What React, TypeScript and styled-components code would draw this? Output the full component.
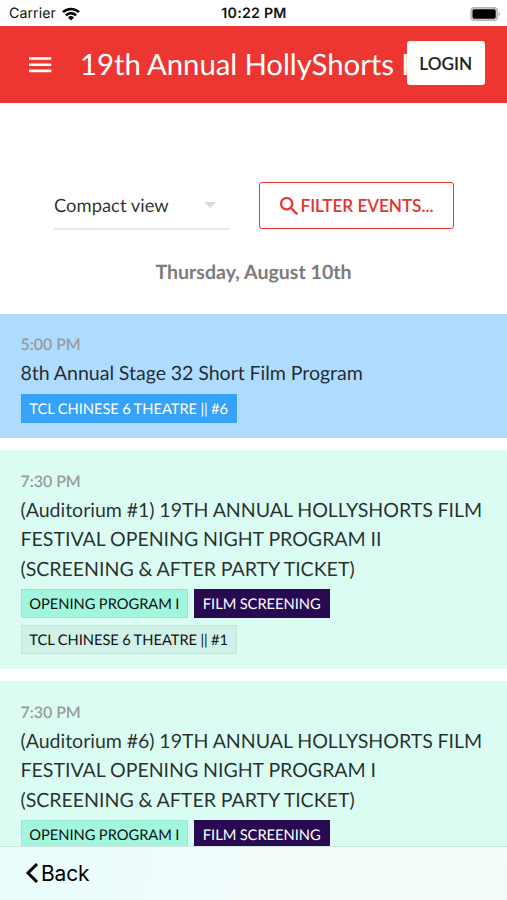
import React from 'react';
import styled, { createGlobalStyle } from 'styled-components';

const GlobalStyle = createGlobalStyle`
  * { box-sizing: border-box; }
  body {
    margin: 0;
    background: #fff;
    font-family: Lato, sans-serif;
    color: rgba(0, 0, 0, 0.82);
    text-rendering: geometricPrecision;
  }
`;

const Screen = styled.div`
  display: flex;
  flex-direction: column;
  width: 507px;
  height: 900px;
  overflow: hidden;
  background: #fff;
`;

const StatusBar = styled.div`
  flex: none;
  display: grid;
  grid-template-columns: 1fr auto 1fr;
  align-items: center;
  height: 26px;
  padding: 1px 6px 0 9px;
  font-family: Inter, sans-serif;
  font-size: 14.2px;
  color: #111;
`;

const Carrier = styled.div`
  display: flex;
  align-items: center;
  gap: 6px;
  letter-spacing: 0.06px;
`;

const Clock = styled.div`
  padding-right: 2px;
  font-weight: 600;
  letter-spacing: 0.25px;
`;

const BatterySlot = styled.div`
  display: flex;
  justify-content: flex-end;
`;

const Header = styled.header`
  flex: none;
  display: flex;
  align-items: center;
  height: 77px;
  padding: 0 22px 0 27px;
  background: #ed3532;
  color: #fff;
`;

const MenuButton = styled.button`
  flex: none;
  display: flex;
  margin: 0 27px 0 0;
  padding: 0;
  border: 0;
  background: none;
`;

const Title = styled.h1`
  flex: 1;
  min-width: 0;
  margin: 0;
  overflow: hidden;
  white-space: nowrap;
  font-size: 29.4px;
  font-weight: 400;
  line-height: 40px;
  letter-spacing: -0.07px;
  word-spacing: -0.2px;
`;

const LoginButton = styled.button`
  flex: none;
  width: 78.5px;
  height: 44px;
  margin-top: -3px;
  padding: 0;
  border: 0;
  border-radius: 3px;
  background: #fff;
  color: #222;
  font: 600 17.2px Lato, sans-serif;
`;

const Controls = styled.div`
  flex: none;
  display: flex;
  justify-content: space-between;
  height: 47px;
  margin: 79px 53px 0 54px;
`;

const Select = styled.div`
  display: flex;
  align-items: center;
  justify-content: space-between;
  width: 176px;
  height: 48px;
  padding: 0 14px 1px 0;
  border-bottom: 2px solid #e9e9e9;
  font-size: 18.4px;
`;

const FilterButton = styled.button`
  display: flex;
  align-items: center;
  justify-content: center;
  gap: 3px;
  width: 195px;
  height: 47px;
  padding: 0;
  border: 1.4px solid #ed3532;
  border-radius: 3px;
  background: #fff;
  color: #e53431;
  font: 600 17.2px Lato, sans-serif;
  letter-spacing: -0.06px;
`;

const DayHeading = styled.h2`
  flex: none;
  margin: 29px 0 26.6px;
  text-align: center;
  font-size: 19.6px;
  font-weight: 700;
  line-height: 29px;
  color: #7c7c7c;
`;

const EventList = styled.main`
  flex: 1;
  min-height: 0;
  display: flex;
  flex-direction: column;
  gap: 12.4px;
  overflow: hidden;
`;

const EventCard = styled.article<{ $bg: string }>`
  flex: none;
  padding: 20.5px 20.5px 15px;
  background: ${(p) => p.$bg};
`;

const EventTime = styled.div`
  height: 25px;
  font-size: 15.9px;
  font-weight: 600;
  line-height: 22px;
  color: #999;
`;

const EventTitle = styled.h3`
  margin: 0 -5px 0 0;
  font-size: 19.6px;
  font-weight: 400;
  line-height: 29.4px;
  letter-spacing: -0.04px;
  word-spacing: -0.15px;
`;

const Tags = styled.div`
  display: flex;
  flex-wrap: wrap;
  gap: 6.6px 5.9px;
  margin-top: 5.4px;
`;

type Tone = 'blue' | 'mint' | 'purple' | 'pale';

const tones: Record<Tone, [string, string, string]> = {
  blue: ['#36a3fb', '#fff', '#36a3fb'],
  mint: ['#a2f6de', '#111', '#93ecd2'],
  purple: ['#270a52', '#fff', '#270a52'],
  pale: ['#d0f1e8', '#111', '#c1e6dc'],
};

const Tag = styled.span<{ $tone: Tone }>`
  height: 29px;
  padding: 0 7.8px;
  border: 1px solid ${(p) => tones[p.$tone][2]};
  background: ${(p) => tones[p.$tone][0]};
  color: ${(p) => tones[p.$tone][1]};
  font-size: 14.7px;
  line-height: 28.2px;
  letter-spacing: -0.02px;
  word-spacing: -0.4px;
  white-space: nowrap;
`;

const BottomBar = styled.nav`
  flex: none;
  display: flex;
  align-items: center;
  height: 54px;
  padding: 0 25px 1px;
  border-top: 1px solid #cfe3df;
  background: linear-gradient(100deg, #e9fdfd, #f4fcfa 65%, #f1fcf9);
`;

const BackButton = styled.button`
  display: flex;
  align-items: center;
  gap: 2px;
  padding: 0;
  border: 0;
  background: none;
  color: #000;
  font: 400 21px Inter, sans-serif;
  letter-spacing: -0.2px;
`;

const events: { time: string; title: string; bg: string; tags: [string, Tone][] }[] = [
  {
    time: '5:00 PM',
    title: '8th Annual Stage 32 Short Film Program',
    bg: '#afdbff',
    tags: [['TCL CHINESE 6 THEATRE || #6', 'blue']],
  },
  {
    time: '7:30 PM',
    title:
      '(Auditorium #1) 19TH ANNUAL HOLLYSHORTS FILM FESTIVAL OPENING NIGHT PROGRAM II (SCREENING & AFTER PARTY TICKET)',
    bg: '#dafcf3',
    tags: [
      ['OPENING PROGRAM I', 'mint'],
      ['FILM SCREENING', 'purple'],
      ['TCL CHINESE 6 THEATRE || #1', 'pale'],
    ],
  },
  {
    time: '7:30 PM',
    title:
      '(Auditorium #6) 19TH ANNUAL HOLLYSHORTS FILM FESTIVAL OPENING NIGHT PROGRAM I (SCREENING & AFTER PARTY TICKET)',
    bg: '#dafcf3',
    tags: [
      ['OPENING PROGRAM I', 'mint'],
      ['FILM SCREENING', 'purple'],
    ],
  },
];

const WifiIcon = () => (
  <svg width="18" height="14" viewBox="0 0 18 14" fill="none" stroke="#000" strokeWidth="2.5">
    <path d="M1 5.2a11.4 11.4 0 0 1 16 0" />
    <path d="M3.9 8.3a7.2 7.2 0 0 1 10.2 0" />
    <path d="M9 13.6 6 10.5a4.3 4.3 0 0 1 6 0Z" fill="#000" stroke="none" />
  </svg>
);

const BatteryIcon = () => (
  <svg width="31" height="14" viewBox="0 0 31 14">
    <rect x="0.9" y="0.7" width="26.6" height="12.6" rx="3.4" fill="#ccc" stroke="#b4b4b4" strokeWidth="1.2" />
    <rect x="2.5" y="2.2" width="23.2" height="9.6" rx="1.8" fill="#000" />
    <path d="M28.7 4.8a2.5 2.5 0 0 1 0 4.4Z" fill="#aaa" />
  </svg>
);

const MenuIcon = () => (
  <svg width="26" height="18" viewBox="0 0 26 18" fill="#fff">
    <path d="M2 1.2h22.3v2.6H2zM2 7.4h22.3v2.6H2zM2 13.6h22.3v2.6H2z" />
  </svg>
);

const CaretIcon = () => (
  <svg width="12" height="6" viewBox="0 0 12 6" fill="#dadada">
    <path d="M0 0h12L6 6Z" />
  </svg>
);

const SearchIcon = () => (
  <svg width="18" height="18" viewBox="3 3 17.5 17.5" fill="currentColor" stroke="currentColor" strokeWidth="0.3">
    <path d="M15.5 14h-.79l-.28-.27A6.47 6.47 0 0 0 16 9.5 6.5 6.5 0 1 0 9.5 16c1.61 0 3.09-.59 4.23-1.57l.27.28v.79l5 4.99L20.49 19l-4.99-5zm-6 0C7.01 14 5 11.99 5 9.5S7.01 5 9.5 5 14 7.01 14 9.5 11.99 14 9.5 14z" />
  </svg>
);

const BackIcon = () => (
  <svg width="14" height="22" viewBox="0 0 14 22" fill="none" stroke="#000" strokeWidth="3">
    <path d="M12 2 3 11l9 9" />
  </svg>
);

export default function App() {
  return (
    <Screen>
      <GlobalStyle />
      <StatusBar>
        <Carrier>
          Carrier
          <WifiIcon />
        </Carrier>
        <Clock>10:22 PM</Clock>
        <BatterySlot>
          <BatteryIcon />
        </BatterySlot>
      </StatusBar>
      <Header>
        <MenuButton aria-label="Menu">
          <MenuIcon />
        </MenuButton>
        <Title>19th Annual HollyShorts Film Festival</Title>
        <LoginButton>LOGIN</LoginButton>
      </Header>
      <Controls>
        <Select>
          Compact view
          <CaretIcon />
        </Select>
        <FilterButton>
          <SearchIcon />
          FILTER EVENTS...
        </FilterButton>
      </Controls>
      <DayHeading>Thursday, August 10th</DayHeading>
      <EventList>
        {events.map((event) => (
          <EventCard key={event.title} $bg={event.bg}>
            <EventTime>{event.time}</EventTime>
            <EventTitle>{event.title}</EventTitle>
            <Tags>
              {event.tags.map(([label, tone]) => (
                <Tag key={label} $tone={tone}>
                  {label}
                </Tag>
              ))}
            </Tags>
          </EventCard>
        ))}
      </EventList>
      <BottomBar>
        <BackButton>
          <BackIcon />
          Back
        </BackButton>
      </BottomBar>
    </Screen>
  );
}
